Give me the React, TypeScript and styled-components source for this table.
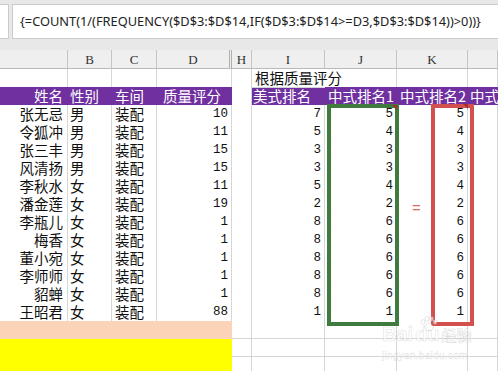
import React from "react";
import styled, { createGlobalStyle, css } from "styled-components";

const GRID = "#d6d6d6";
const PURPLE = "#7030a0";
const SALMON = "#fbd3b6";
const YELLOW = "#ffff00";
const CJK = `"Noto Sans CJK SC", "Noto Sans", sans-serif`;
const MONO = `"Liberation Mono", "DejaVu Sans Mono", monospace`;

// A B C D | H I J K L  (E-G hidden)
const COLS = "68px 44px 45px 75px 20px 73px 72px 71px 1fr";

type Align = "left" | "right" | "center";

const GlobalStyle = createGlobalStyle`
    html, body { margin: 0; padding: 0; background: #fff; overflow: hidden; }
    * { box-sizing: border-box; }
`;

const Page = styled.div`
    position: relative;
    width: 498px;
    height: 371px;
    overflow: hidden;
    background: #fff;
`;

const FormulaBar = styled.div`
    display: flex;
    align-items: flex-start;
    gap: 3px;
    height: 50px;
    padding-top: 4px;
    background: #e8e8e8;
`;
const NameBoxEdge = styled.div`
    width: 9px;
    height: 35px;
    background: #fff;
    border: 1px solid #cbcbcb;
    border-left: none;
`;
const FormulaInput = styled.div`
    flex: 1;
    height: 35px;
    padding-left: 7px;
    background: #fff;
    border: 1px solid #cbcbcb;
    border-right: none;
    font-family: "Noto Sans", "DejaVu Sans", sans-serif;
    font-size: 12.8px;
    line-height: 33px;
    color: #222;
    white-space: nowrap;
    overflow: hidden;
`;

const SheetRow = styled.div<{ $h?: number }>`
    display: grid;
    grid-template-columns: ${COLS};
    height: ${(p) => p.$h ?? 18}px;
`;

const ColHead = styled.div<{ $double?: boolean }>`
    display: flex;
    align-items: center;
    justify-content: center;
    padding-top: 2px;
    background: #efefef;
    border-right: 1px solid #c4c4c4;
    border-bottom: 1px solid #b8b8b8;
    font-family: "Liberation Serif", serif;
    font-size: 13px;
    color: #333;
    ${(p) =>
        p.$double &&
        css`
            border-right: 3px double #b0b0b0;
        `}
`;

const Cell = styled.div<{
    $align?: Align;
    $fill?: string;
    $num?: boolean;
    $spill?: boolean;
    $pad?: string;
}>`
    position: relative;
    display: flex;
    align-items: center;
    justify-content: ${(p) =>
        p.$align === "right" ? "flex-end" : p.$align === "center" ? "center" : "flex-start"};
    padding: ${(p) => p.$pad ?? "0 3px"};
    background: ${(p) => p.$fill ?? "#fff"};
    border-right: 1px solid ${(p) => (p.$fill || p.$spill ? "transparent" : GRID)};
    border-bottom: 1px solid ${(p) => (p.$fill ? "transparent" : GRID)};
    color: ${(p) => (p.$fill === PURPLE ? "#fff" : "#111")};
    font-family: ${(p) => (p.$num ? MONO : CJK)};
    font-size: ${(p) => (p.$num ? "12.5px" : "14.5px")};
    line-height: 18px;
    white-space: nowrap;
    overflow: visible;
    z-index: ${(p) => (p.$spill ? 1 : 0)};
`;

const Frame = styled.div<{ $color: string }>`
    position: absolute;
    top: 104px;
    height: 222px;
    border: 4px solid ${(p) => p.$color};
    pointer-events: none;
`;

const NoteMark = styled.div`
    position: absolute;
    top: 105px;
    width: 0;
    height: 0;
    border-top: 5px solid #a3302c;
    border-left: 5px solid transparent;
`;

const EqualSign = styled.span`
    position: absolute;
    left: 412px;
    top: 199px;
    font-family: "Liberation Sans", sans-serif;
    font-size: 15px;
    color: #dc6a66;
`;

const Watermark = styled.div`
    position: absolute;
    left: 382px;
    top: 318px;
    width: 92px;
    color: rgba(255, 255, 255, 0.6);
    -webkit-text-stroke: 0.6px rgba(140, 140, 140, 0.3);
    font-family: "Liberation Sans", sans-serif;
`;
const WatermarkLogo = styled.div`
    display: flex;
    align-items: flex-end;
    gap: 2px;
    height: 27px;
    font-size: 20px;
    font-weight: bold;
    line-height: 22px;
`;
const WatermarkCn = styled.span`
    font-family: ${CJK};
    font-size: 15px;
    line-height: 20px;
`;
const WatermarkUrl = styled.div`
    margin-top: 5px;
    font-size: 10px;
    letter-spacing: 0.3px;
    -webkit-text-stroke: 0.4px rgba(140, 140, 140, 0.28);
`;
const Paw = styled.svg`
    position: absolute;
    left: 38px;
    top: -2px;
`;

const people: [string, string, number, number, number, number][] = [
    ["张无忌", "男", 10, 7, 5, 5],
    ["令狐冲", "男", 11, 5, 4, 4],
    ["张三丰", "男", 15, 3, 3, 3],
    ["风清扬", "男", 15, 3, 3, 3],
    ["李秋水", "女", 11, 5, 4, 4],
    ["潘金莲", "女", 19, 2, 2, 2],
    ["李瓶儿", "女", 1, 8, 6, 6],
    ["梅香", "女", 1, 8, 6, 6],
    ["董小宛", "女", 1, 8, 6, 6],
    ["李师师", "女", 1, 8, 6, 6],
    ["貂蝉", "女", 1, 8, 6, 6],
    ["王昭君", "女", 88, 1, 1, 1],
];

const FORMULA = "{=COUNT(1/(FREQUENCY($D$3:$D$14,IF($D$3:$D$14>=D3,$D$3:$D$14))>0))}";

const FillRow: React.FC<{ fill: string }> = ({ fill }) => (
    <SheetRow>
        <Cell $fill={fill} />
        <Cell $fill={fill} />
        <Cell $fill={fill} />
        <Cell $fill={fill} />
        <Cell />
        <Cell />
        <Cell />
        <Cell />
        <Cell />
    </SheetRow>
);

export default function App() {
    return (
        <Page>
            <GlobalStyle />
            <FormulaBar>
                <NameBoxEdge />
                <FormulaInput>{FORMULA}</FormulaInput>
            </FormulaBar>

            <SheetRow $h={19}>
                <ColHead />
                <ColHead>B</ColHead>
                <ColHead>C</ColHead>
                <ColHead $double>D</ColHead>
                <ColHead>H</ColHead>
                <ColHead>I</ColHead>
                <ColHead>J</ColHead>
                <ColHead>K</ColHead>
                <ColHead />
            </SheetRow>

            <SheetRow>
                <Cell />
                <Cell />
                <Cell />
                <Cell />
                <Cell />
                <Cell $spill>根据质量评分</Cell>
                <Cell />
                <Cell />
                <Cell />
            </SheetRow>

            <SheetRow>
                <Cell $fill={PURPLE} $align="right" $pad="0 4px">姓名</Cell>
                <Cell $fill={PURPLE} $pad="0 2px">性别</Cell>
                <Cell $fill={PURPLE}>车间</Cell>
                <Cell $fill={PURPLE} $pad="0 6px">质量评分</Cell>
                <Cell />
                <Cell $fill={PURPLE} $pad="0 1px">美式排名</Cell>
                <Cell $fill={PURPLE}>中式排名1</Cell>
                <Cell $fill={PURPLE}>中式排名2</Cell>
                <Cell $fill={PURPLE} $pad="0 2px">中式</Cell>
            </SheetRow>

            {people.map(([name, sex, score, us, cn1, cn2]) => (
                <SheetRow key={name}>
                    <Cell $align="right" $pad="0 4px">{name}</Cell>
                    <Cell $pad="0 2px">{sex}</Cell>
                    <Cell>装配</Cell>
                    <Cell $num $align="right">{score}</Cell>
                    <Cell />
                    <Cell $num $align="right">{us}</Cell>
                    <Cell $num $align="right">{cn1}</Cell>
                    <Cell $num $align="right">{cn2}</Cell>
                    <Cell />
                </SheetRow>
            ))}

            <FillRow fill={SALMON} />
            <FillRow fill={YELLOW} />
            <FillRow fill={YELLOW} />

            <Frame $color="#3e7b3c" style={{ left: 327, width: 72 }} />
            <Frame $color="#d2504e" style={{ left: 431, width: 43 }} />
            <NoteMark style={{ left: 392 }} />
            <NoteMark style={{ left: 463, top: 104 }} />
            <EqualSign>=</EqualSign>

            <Watermark>
                <Paw width="18" height="15" viewBox="0 0 18 15">
                    <g fill="rgba(255,255,255,0.6)" stroke="rgba(140,140,140,0.3)" strokeWidth="0.7">
                        <ellipse cx="3" cy="6" rx="2" ry="2.4" />
                        <ellipse cx="7" cy="2.8" rx="2" ry="2.4" />
                        <ellipse cx="11.5" cy="2.8" rx="2" ry="2.4" />
                        <ellipse cx="15" cy="6" rx="2" ry="2.4" />
                        <path d="M9 7 C6 7 4 11 5 13 C6 15 12 15 13 13 C14 11 12 7 9 7 Z" />
                    </g>
                </Paw>
                <WatermarkLogo>
                    <span>Bai</span>
                    <span>du</span>
                    <WatermarkCn>经验</WatermarkCn>
                </WatermarkLogo>
                <WatermarkUrl>jingyan.baidu.com</WatermarkUrl>
            </Watermark>
        </Page>
    );
}
